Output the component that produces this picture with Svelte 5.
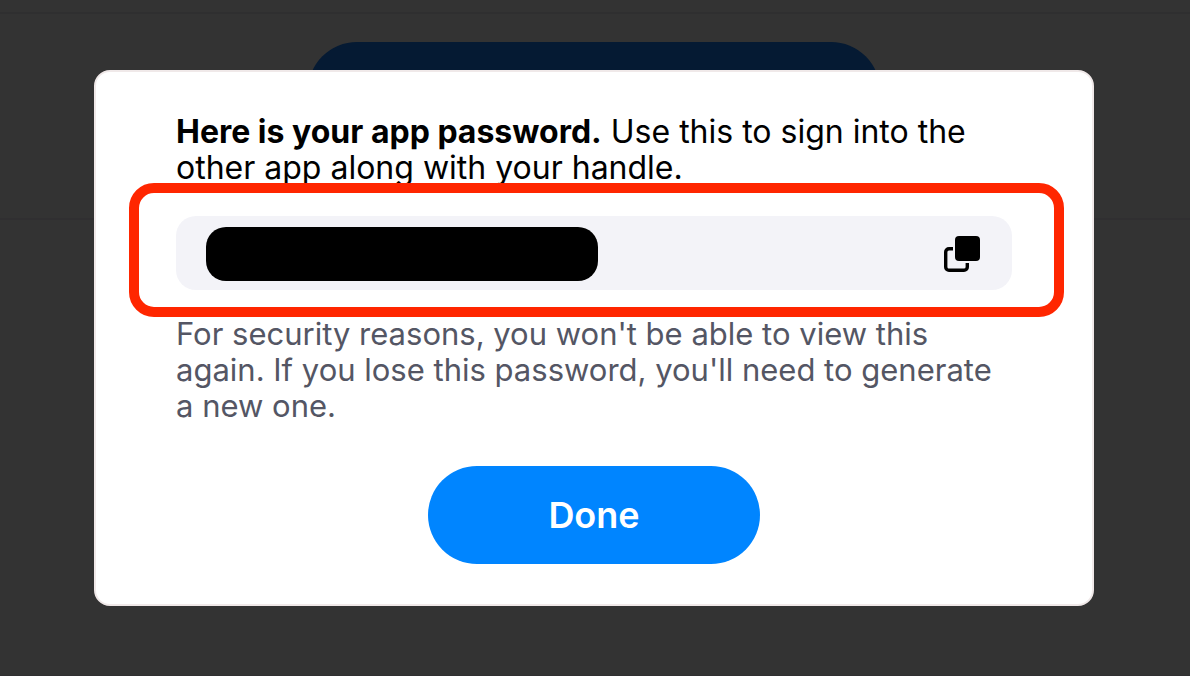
<script lang="ts">
  let open = $state(true);
</script>

<div class="screen">
  <div class="page" aria-hidden="true">
    <div class="bar"></div>
    <div class="content">
      <div class="pill"></div>
    </div>
    <div class="footer"></div>
  </div>

  {#if open}
    <div class="backdrop">
      <div class="dialog" role="dialog" aria-modal="true" aria-labelledby="intro">
        <p id="intro"><strong>Here is your app password.</strong> Use this to sign into the other app along with your handle.</p>

        <div class="field">
          <span class="redacted"></span>
          <button class="copy" type="button" aria-label="Copy">
            <svg viewBox="0 0 36 36" width="36" height="36">
              <rect x="11" y="0" width="25" height="25" rx="4" fill="#000" />
              <path d="M9 12.7H5A3.3 3.3 0 0 0 1.7 16V31A3.3 3.3 0 0 0 5 34.3H20A3.3 3.3 0 0 0 23.3 31V27" fill="none" stroke="#000" stroke-width="3.4" />
            </svg>
          </button>
          <span class="highlight"></span>
        </div>

        <p class="note">For security reasons, you won't be able to view this again. If you lose this password, you'll need to generate a new one.</p>

        <button class="done" type="button" onclick={() => (open = false)}>Done</button>
      </div>
    </div>
  {/if}
</div>

<style>
  :global(body) {
    margin: 0;
    background: #333;
  }

  .screen {
    display: grid;
    min-height: 100vh;
    font-family: Inter, "Liberation Sans", sans-serif;
    font-size: 32px;
    line-height: 36px;
    color: #000;
  }

  .page,
  .backdrop {
    grid-area: 1 / 1;
    box-sizing: border-box;
    min-width: 0;
  }

  .page {
    display: flex;
    flex-direction: column;
    background: #333;
  }

  .bar {
    height: 12px;
    border-bottom: 2px solid #2f2f30;
  }

  .content {
    display: flex;
    justify-content: center;
    padding: 28px 24px 78px 22px;
    border-bottom: 2px solid #302f31;
  }

  .pill {
    width: 100%;
    max-width: 572px;
    height: 98px;
    border-radius: 50px;
    background: #051a33;
  }

  .footer {
    margin-top: auto;
    border-bottom: 1px solid #302f31;
  }

  .backdrop {
    display: flex;
    justify-content: center;
    align-items: center;
    padding: 24px 24px 24px 22px;
  }

  .dialog {
    box-sizing: border-box;
    display: flex;
    flex-direction: column;
    width: 100%;
    max-width: 1000px;
    padding: 42px 80px 40px;
    border: 2px solid #f0e9e9;
    border-radius: 16px;
    background: #fff;
  }

  p {
    margin: 0;
  }

  .field {
    position: relative;
    display: flex;
    align-items: center;
    justify-content: space-between;
    margin: 30px 0 26px;
    padding: 11px 32px 9px 30px;
    border-radius: 20px;
    background: #f3f3f8;
  }

  .redacted {
    flex: 0 1 392px;
    height: 54px;
    border-radius: 20px;
    background: #000;
  }

  .copy {
    display: flex;
    padding: 0;
    border: 0;
    background: none;
    cursor: pointer;
  }

  .highlight {
    position: absolute;
    inset: -33px -52px -27px -47px;
    border: 10px solid #ff2600;
    border-radius: 25px;
    pointer-events: none;
  }

  .note {
    color: #545664;
    font-size: 31px;
  }

  .done {
    align-self: center;
    width: 332px;
    max-width: 100%;
    margin-top: 42px;
    padding: 31px 24px;
    border: 0;
    border-radius: 50px;
    background: #0085ff;
    color: #fff;
    font: 600 36px/36px Inter, "Liberation Sans", sans-serif;
    cursor: pointer;
  }
</style>
